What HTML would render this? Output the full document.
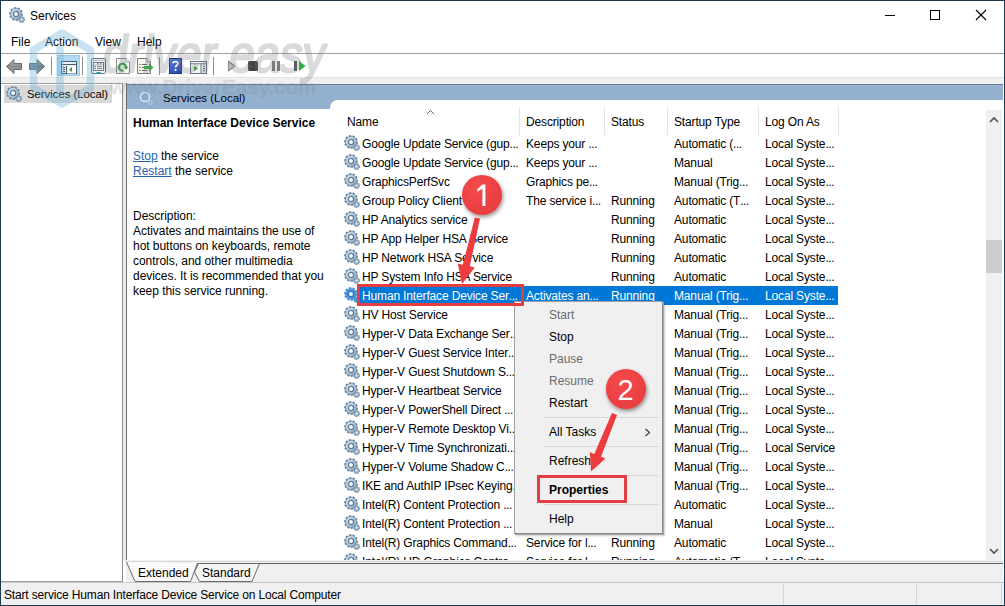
<!DOCTYPE html>
<html><head><meta charset="utf-8">
<style>
*{margin:0;padding:0;box-sizing:border-box}
html,body{width:1005px;height:606px;overflow:hidden;background:#fff}
body{position:relative;font-family:"Liberation Sans",sans-serif;font-size:12px;color:#000}
.a{position:absolute}
.t{position:absolute;white-space:nowrap;line-height:15px}
svg{display:block}
i{font-style:normal;letter-spacing:-0.45px}
</style></head><body>
<svg width="0" height="0" style="position:absolute">
<defs>
<linearGradient id="gg" x1="0" y1="0" x2="1" y2="1"><stop offset="0" stop-color="#dcebf7"/><stop offset="1" stop-color="#8fb0cc"/></linearGradient>
<symbol id="gear" viewBox="0 0 16 16">
<path fill="#6f8aa4" d="M12.38 6.54 L13.99 6.73 L13.60 9.32 L12.00 9.03 L11.62 9.79 L12.82 10.89 L10.98 12.76 L9.85 11.58 L9.10 11.97 L9.42 13.57 L6.83 14.00 L6.61 12.39 L5.78 12.26 L5.09 13.74 L2.75 12.56 L3.52 11.13 L2.92 10.54 L1.50 11.33 L0.29 9.00 L1.76 8.30 L1.62 7.46 L0.01 7.27 L0.40 4.68 L2.00 4.97 L2.38 4.21 L1.18 3.11 L3.02 1.24 L4.15 2.42 L4.90 2.03 L4.58 0.43 L7.17 0.00 L7.39 1.61 L8.22 1.74 L8.91 0.26 L11.25 1.44 L10.48 2.87 L11.08 3.46 L12.50 2.67 L13.71 5.00 L12.24 5.70Z"/>
<circle cx="7" cy="7" r="5.6" fill="#7f99b1"/>
<circle cx="7" cy="7" r="4.9" fill="url(#gg)"/>
<circle cx="7" cy="7" r="2.6" fill="#fff" stroke="#5d7890" stroke-width="1.3"/>
<path fill="#627c94" d="M14.99 12.37 L16.00 12.48 L15.68 14.03 L14.71 13.74 L14.45 14.13 L15.09 14.92 L13.77 15.79 L13.29 14.90 L12.83 14.99 L12.72 16.00 L11.17 15.68 L11.46 14.71 L11.07 14.45 L10.28 15.09 L9.41 13.77 L10.30 13.29 L10.21 12.83 L9.20 12.72 L9.52 11.17 L10.49 11.46 L10.75 11.07 L10.11 10.28 L11.43 9.41 L11.91 10.30 L12.37 10.21 L12.48 9.20 L14.03 9.52 L13.74 10.49 L14.13 10.75 L14.92 10.11 L15.79 11.43 L14.90 11.91Z"/>
<circle cx="12.6" cy="12.6" r="2.3" fill="#a0bad1"/>
<circle cx="12.6" cy="12.6" r="0.9" fill="#e8f0f6"/>
</symbol>
<symbol id="gearlight" viewBox="0 0 16 16">
<circle cx="12.83" cy="8.80" r="0.65" fill="#7f9dbd"/><circle cx="10.66" cy="11.88" r="0.65" fill="#7f9dbd"/><circle cx="7.09" cy="13.10" r="0.65" fill="#7f9dbd"/><circle cx="3.48" cy="11.99" r="0.65" fill="#7f9dbd"/><circle cx="1.23" cy="8.97" r="0.65" fill="#7f9dbd"/><circle cx="1.17" cy="5.20" r="0.65" fill="#7f9dbd"/><circle cx="3.34" cy="2.12" r="0.65" fill="#7f9dbd"/><circle cx="6.91" cy="0.90" r="0.65" fill="#7f9dbd"/><circle cx="10.52" cy="2.01" r="0.65" fill="#7f9dbd"/><circle cx="12.77" cy="5.03" r="0.65" fill="#7f9dbd"/>
<circle cx="7" cy="7" r="4.6" fill="#8eaacb" stroke="#dce8f3" stroke-width="1.5"/>
<circle cx="15.50" cy="12.30" r="0.5" fill="#7f9dbd"/><circle cx="14.56" cy="14.56" r="0.5" fill="#7f9dbd"/><circle cx="12.30" cy="15.50" r="0.5" fill="#7f9dbd"/><circle cx="10.04" cy="14.56" r="0.5" fill="#7f9dbd"/><circle cx="9.10" cy="12.30" r="0.5" fill="#7f9dbd"/><circle cx="10.04" cy="10.04" r="0.5" fill="#7f9dbd"/><circle cx="12.30" cy="9.10" r="0.5" fill="#7f9dbd"/><circle cx="14.56" cy="10.04" r="0.5" fill="#7f9dbd"/>
<circle cx="12.3" cy="12.3" r="2" fill="none" stroke="#c2d4e6" stroke-width="1"/>
</symbol>
<symbol id="gearsel" viewBox="0 0 16 16">
<path fill="#4f94d8" d="M12.38 6.54 L13.99 6.73 L13.60 9.32 L12.00 9.03 L11.62 9.79 L12.82 10.89 L10.98 12.76 L9.85 11.58 L9.10 11.97 L9.42 13.57 L6.83 14.00 L6.61 12.39 L5.78 12.26 L5.09 13.74 L2.75 12.56 L3.52 11.13 L2.92 10.54 L1.50 11.33 L0.29 9.00 L1.76 8.30 L1.62 7.46 L0.01 7.27 L0.40 4.68 L2.00 4.97 L2.38 4.21 L1.18 3.11 L3.02 1.24 L4.15 2.42 L4.90 2.03 L4.58 0.43 L7.17 0.00 L7.39 1.61 L8.22 1.74 L8.91 0.26 L11.25 1.44 L10.48 2.87 L11.08 3.46 L12.50 2.67 L13.71 5.00 L12.24 5.70Z"/>
<circle cx="7" cy="7" r="5.6" fill="#4f94d8"/>
<circle cx="7" cy="7" r="4.9" fill="#4f94d8"/>
<circle cx="7" cy="7" r="2.6" fill="#fff" stroke="#2a73c0" stroke-width="1.3"/>
<path fill="#4f94d8" d="M14.99 12.37 L16.00 12.48 L15.68 14.03 L14.71 13.74 L14.45 14.13 L15.09 14.92 L13.77 15.79 L13.29 14.90 L12.83 14.99 L12.72 16.00 L11.17 15.68 L11.46 14.71 L11.07 14.45 L10.28 15.09 L9.41 13.77 L10.30 13.29 L10.21 12.83 L9.20 12.72 L9.52 11.17 L10.49 11.46 L10.75 11.07 L10.11 10.28 L11.43 9.41 L11.91 10.30 L12.37 10.21 L12.48 9.20 L14.03 9.52 L13.74 10.49 L14.13 10.75 L14.92 10.11 L15.79 11.43 L14.90 11.91Z"/>
<circle cx="12.6" cy="12.6" r="2.3" fill="#4f94d8"/>
<circle cx="12.6" cy="12.6" r="0.9" fill="#4f94d8"/>
</symbol>
</defs>
</svg>

<!-- window frame -->
<div class="a" style="left:0;top:0;width:1005px;height:606px;border:1px solid #1d3a4e"></div>

<!-- title bar -->
<svg class="a" style="left:9px;top:7px" width="16" height="16"><use href="#gear"/></svg>
<div class="t" style="left:30px;top:9px">Services</div>
<div class="a" style="left:885px;top:15px;width:10px;height:1px;background:#000"></div>
<div class="a" style="left:930px;top:10px;width:10px;height:10px;border:1px solid #000"></div>
<svg class="a" style="left:975px;top:9px" width="12" height="12"><path d="M1 1L11 11M11 1L1 11" stroke="#000" stroke-width="1.1"/></svg>

<!-- menu -->
<div class="t" style="left:11px;top:35px">File</div>
<div class="t" style="left:45px;top:35px">Action</div>
<div class="t" style="left:95px;top:35px">View</div>
<div class="t" style="left:137px;top:35px">Help</div>
<div class="a" style="left:1px;top:53px;width:1003px;height:1px;background:#a0a0a0"></div>

<!-- toolbar -->
<svg class="a" style="left:5px;top:58px" width="18" height="17" viewBox="0 0 18 17"><defs><linearGradient id="ba" x1="0" y1="0" x2="0" y2="1"><stop offset="0" stop-color="#b8b8b8"/><stop offset="0.5" stop-color="#8c8c8c"/><stop offset="1" stop-color="#a8a8a8"/></linearGradient></defs><path d="M1.5 8.5L9 1.5V5.5H16.5V11.5H9V15.5Z" fill="url(#ba)" stroke="#6a6a6a" stroke-width="1" stroke-linejoin="round"/></svg>
<svg class="a" style="left:28px;top:58px" width="18" height="17" viewBox="0 0 18 17"><defs><linearGradient id="fa" x1="0" y1="0" x2="0" y2="1"><stop offset="0" stop-color="#9fb2bd"/><stop offset="0.5" stop-color="#6b8796"/><stop offset="1" stop-color="#8aa0ac"/></linearGradient></defs><path d="M16.5 8.5L9 1.5V5.5H1.5V11.5H9V15.5Z" fill="url(#fa)" stroke="#5f6f78" stroke-width="1" stroke-linejoin="round"/></svg>
<div class="a" style="left:51px;top:57px;width:1px;height:18px;background:#8c8c8c"></div>
<div class="a" style="left:57px;top:55px;width:23px;height:21px;background:#b3daf3;border:1px solid #99cbec"></div>
<svg class="a" style="left:61px;top:61px" width="16" height="13" viewBox="0 0 16 13"><rect x="0.5" y="0.5" width="15" height="12" fill="#dbe9f3" stroke="#4d5d6c"/><path d="M1 2H10.5" stroke="#f4f8fb" stroke-width="1"/><path d="M12 2h1M14 2h1" stroke="#f4f8fb"/><path d="M0.5 3.5H15.5" stroke="#4d5d6c"/><path d="M1 4.5H15" stroke="#e8eef3"/><rect x="6" y="5" width="9" height="7.5" fill="#fbf8fb"/><path d="M5.5 5V12.5" stroke="#4d5d6c"/><path d="M2 6.5h2M2 8.5h2M2 10.5h2" stroke="#4d5d6c"/><path d="M11 6L8 8.5L11 11Z" fill="#28a428"/></svg>
<div class="a" style="left:82px;top:57px;width:1px;height:18px;background:#8c8c8c"></div>
<svg class="a" style="left:91px;top:58px" width="15" height="16" viewBox="0 0 15 16"><rect x="0.5" y="0.5" width="14" height="15" rx="1.2" fill="#f3f6f8" stroke="#5f6a75"/><path d="M2 2.5H12.5" stroke="#b5bec6"/><rect x="2.5" y="4.5" width="10" height="8" fill="#fff" stroke="#6a7580"/><path d="M6 5.8h2M9 5.8h2" stroke="#6a7580"/><path d="M3 7H12" stroke="#6a7580" stroke-width="0.6"/><circle cx="4.2" cy="8.7" r="0.7" fill="#4a5560"/><circle cx="4.2" cy="10.6" r="0.7" fill="#4a5560"/><path d="M6 8.7h5M6 10.6h5" stroke="#6a7580" stroke-width="1"/><rect x="5.5" y="14" width="4" height="2" fill="#20a0a0"/></svg>
<svg class="a" style="left:116px;top:58px" width="14" height="16" viewBox="0 0 14 16"><path d="M0.5 0.5H10L13.5 4V15.5H0.5Z" fill="#f9f9f9" stroke="#8a8a8a"/><path d="M10 0.5V4H13.5" fill="#fff" stroke="#9a9a9a"/><path d="M7.41 12.58 A3.50 3.50 0 1 1 9.99 8.89" fill="none" stroke="#3aa046" stroke-width="2.2"/><path d="M12.28 8.69 L7.70 9.10 L10.23 11.68Z" fill="#2e9a3c"/></svg>
<svg class="a" style="left:137px;top:58px" width="17" height="16" viewBox="0 0 17 16"><path d="M0.5 0.5H10L13.5 4V15.5H0.5Z" fill="#f8f6ea" stroke="#7a7a7a"/><path d="M10 0.5V4H13.5" fill="#fff" stroke="#8a8a8a"/><path d="M2.5 6.5h1M2.5 9.5h1M2.5 12.5h1" stroke="#222" stroke-width="1.2"/><path d="M5 6.5h5M5 9.5h5M5 12.5h5" stroke="#666" stroke-width="1"/><path d="M7 8H12V5.5L16.5 9.5L12 13.5V11H7Z" fill="#37b04a"/></svg>
<div class="a" style="left:159px;top:57px;width:1px;height:18px;background:#8c8c8c"></div>
<svg class="a" style="left:169px;top:58px" width="13" height="16" viewBox="0 0 13 16"><defs><linearGradient id="hq" x1="0" y1="0" x2="1" y2="1"><stop offset="0" stop-color="#5a7fe0"/><stop offset="1" stop-color="#243fa6"/></linearGradient></defs><rect x="0.5" y="0.5" width="12" height="15" fill="url(#hq)" stroke="#1f3388"/><path d="M4 5.2C4 3.3 9 3 9 5.5C9 7.3 6.5 7.3 6.5 9.5" fill="none" stroke="#fff" stroke-width="1.8"/><rect x="5.6" y="11" width="1.9" height="1.9" fill="#fff"/></svg>
<svg class="a" style="left:190px;top:61px" width="17" height="13" viewBox="0 0 17 13"><rect x="0.5" y="0.5" width="16" height="12" fill="#f4f6f8" stroke="#6a7480"/><line x1="0.5" y1="2.8" x2="16.5" y2="2.8" stroke="#6a7480"/><line x1="11" y1="3" x2="11" y2="12.5" stroke="#6a7480"/><path d="M4 5L8 7.5L4 10Z" fill="#2aa52a"/><path d="M13 5.3h2M13 7.5h2M13 9.7h2" stroke="#5a6a78"/></svg>
<div class="a" style="left:213px;top:57px;width:1px;height:18px;background:#8c8c8c"></div>
<svg class="a" style="left:227px;top:60px" width="9" height="12" viewBox="0 0 9 12"><path d="M1.5 1.2L7.8 6L1.5 10.8Z" fill="#c4c4c4" stroke="#8a8a8a" stroke-width="1.2" stroke-linejoin="round"/></svg>
<div class="a" style="left:248px;top:61px;width:10px;height:10px;background:#454545;border-radius:1.5px"></div>
<div class="a" style="left:272px;top:61px;width:3px;height:10px;background:#7a7a7a"></div>
<div class="a" style="left:277px;top:61px;width:3px;height:10px;background:#7a7a7a"></div>
<div class="a" style="left:294px;top:61px;width:3px;height:10px;background:#555"></div>
<svg class="a" style="left:298px;top:60px" width="8" height="12" viewBox="0 0 8 12"><path d="M1 1L7.5 6L1 11Z" fill="#27b33a"/></svg>
<!-- toolbar strip -->
<div class="a" style="left:1px;top:77px;width:1003px;height:7px;background:#f0f0f0;border-top:1px solid #e3e3e3"></div>

<!-- left tree panel -->
<div class="a" style="left:123px;top:83px;width:3px;height:478px;background:#ececec"></div>
<div class="a" style="left:1px;top:83px;width:122px;height:499px;border:1px solid #a0a0a0;border-left:none;border-right-color:#8c8c8c;background:#fff"></div>
<div class="a" style="left:4px;top:85px;width:108px;height:18px;background:#d9d9d9"></div>
<svg class="a" style="left:6px;top:86px" width="16" height="16"><use href="#gear"/></svg>
<div class="t" style="left:27px;top:87px;font-size:11.3px">Services (Local)</div>

<!-- right panel -->
<div class="a" style="left:126px;top:83px;width:877px;height:478px;background:#f0f0f0;border-left:1px solid #6e6e6e"></div>
<div class="a" style="left:127px;top:84px;width:876px;height:25px;background:#94b0cf;border-top:1px solid #6c7c8c"></div>
<svg class="a" style="left:138px;top:90px" width="16" height="16"><use href="#gearlight"/></svg>
<div class="t" style="left:163px;top:91px;font-size:11.5px">Services (Local)</div>

<!-- description pane -->
<div class="a" style="left:127px;top:109px;width:203px;height:452px;background:#fff"></div>
<div class="t" style="left:133px;top:116px;font-weight:bold">Human Interface Device Service</div>
<div class="t" style="left:133px;top:149px"><span style="color:#2a63ad;text-decoration:underline">Stop</span> the service</div>
<div class="t" style="left:133px;top:164px"><span style="color:#2a63ad;text-decoration:underline">Restart</span> the service</div>
<div class="t" style="left:133px;top:209px;line-height:15px;letter-spacing:-0.04px">Description:<br>Activates and maintains the use of<br>hot buttons on keyboards, remote<br>controls, and other multimedia<br>devices. It is recommended that you<br>keep this service running.</div>

<!-- list view -->
<div class="a" id="lv" style="left:330px;top:100px;width:673px;height:461px;background:#fff;border-top-left-radius:8px;overflow:hidden;letter-spacing:-0.15px">
<div class="t" style="left:17px;top:15px">Name</div>
<svg class="a" style="left:96px;top:9px" width="10" height="6"><path d="M1 5L4.5 1.5L8 5" fill="none" stroke="#606060" stroke-width="1"/></svg>
<div class="a" style="left:189px;top:7px;width:1px;height:28px;background:#e5e5e5"></div>
<div class="t" style="left:196px;top:15px">Description</div>
<div class="a" style="left:274px;top:7px;width:1px;height:28px;background:#e5e5e5"></div>
<div class="t" style="left:281px;top:15px">Status</div>
<div class="a" style="left:337px;top:7px;width:1px;height:28px;background:#e5e5e5"></div>
<div class="t" style="left:344px;top:15px">Startup Type</div>
<div class="a" style="left:428px;top:7px;width:1px;height:28px;background:#e5e5e5"></div>
<div class="t" style="left:435px;top:15px">Log On As</div>
<div class="a" style="left:508px;top:7px;width:1px;height:28px;background:#e5e5e5"></div>
<!-- scrollbar -->
<div class="a" style="left:656px;top:10px;width:16px;height:451px;background:#f0f0f0"></div>
<svg class="a" style="left:659px;top:16px" width="10" height="8"><path d="M1 6L5 2L9 6" fill="none" stroke="#505050" stroke-width="1.6"/></svg>
<div class="a" style="left:656px;top:140px;width:16px;height:33px;background:#cdcdcd"></div>
<svg class="a" style="left:659px;top:447px" width="10" height="8"><path d="M1 2L5 6L9 2" fill="none" stroke="#505050" stroke-width="1.6"/></svg>

<svg class="a" style="left:14px;top:35px" width="16" height="16"><use href="#gear"/></svg>
<div class="t" style="left:32px;top:37px">Google Update Service (gup<i>...</i></div>
<div class="t" style="left:196px;top:37px">Keeps your <i>...</i></div>
<div class="t" style="left:344px;top:37px">Automatic (<i>...</i></div>
<div class="t" style="left:435px;top:37px">Local Syste<i>...</i></div>
<svg class="a" style="left:14px;top:54px" width="16" height="16"><use href="#gear"/></svg>
<div class="t" style="left:32px;top:56px">Google Update Service (gup<i>...</i></div>
<div class="t" style="left:196px;top:56px">Keeps your <i>...</i></div>
<div class="t" style="left:344px;top:56px">Manual</div>
<div class="t" style="left:435px;top:56px">Local Syste<i>...</i></div>
<svg class="a" style="left:14px;top:73px" width="16" height="16"><use href="#gear"/></svg>
<div class="t" style="left:32px;top:75px">GraphicsPerfSvc</div>
<div class="t" style="left:196px;top:75px">Graphics pe<i>...</i></div>
<div class="t" style="left:344px;top:75px">Manual (Trig<i>...</i></div>
<div class="t" style="left:435px;top:75px">Local Syste<i>...</i></div>
<svg class="a" style="left:14px;top:92px" width="16" height="16"><use href="#gear"/></svg>
<div class="t" style="left:32px;top:94px">Group Policy Client</div>
<div class="t" style="left:196px;top:94px">The service i<i>...</i></div>
<div class="t" style="left:281px;top:94px">Running</div>
<div class="t" style="left:344px;top:94px">Automatic (T<i>...</i></div>
<div class="t" style="left:435px;top:94px">Local Syste<i>...</i></div>
<svg class="a" style="left:14px;top:111px" width="16" height="16"><use href="#gear"/></svg>
<div class="t" style="left:32px;top:113px">HP Analytics service</div>
<div class="t" style="left:281px;top:113px">Running</div>
<div class="t" style="left:344px;top:113px">Automatic</div>
<div class="t" style="left:435px;top:113px">Local Syste<i>...</i></div>
<svg class="a" style="left:14px;top:130px" width="16" height="16"><use href="#gear"/></svg>
<div class="t" style="left:32px;top:132px">HP App Helper HSA Service</div>
<div class="t" style="left:281px;top:132px">Running</div>
<div class="t" style="left:344px;top:132px">Automatic</div>
<div class="t" style="left:435px;top:132px">Local Syste<i>...</i></div>
<svg class="a" style="left:14px;top:149px" width="16" height="16"><use href="#gear"/></svg>
<div class="t" style="left:32px;top:151px">HP Network HSA Service</div>
<div class="t" style="left:281px;top:151px">Running</div>
<div class="t" style="left:344px;top:151px">Automatic</div>
<div class="t" style="left:435px;top:151px">Local Syste<i>...</i></div>
<svg class="a" style="left:14px;top:168px" width="16" height="16"><use href="#gear"/></svg>
<div class="t" style="left:32px;top:170px">HP System Info HSA Service</div>
<div class="t" style="left:281px;top:170px">Running</div>
<div class="t" style="left:344px;top:170px">Automatic</div>
<div class="t" style="left:435px;top:170px">Local Syste<i>...</i></div>
<div class="a" style="left:28px;top:186px;width:480px;height:19px;background:#0078d7"></div>
<svg class="a" style="left:14px;top:187px" width="16" height="16"><use href="#gearsel"/></svg>
<div class="t" style="left:32px;top:189px;color:#fff">Human Interface Device Ser<i>...</i></div>
<div class="t" style="left:196px;top:189px;color:#fff">Activates an<i>...</i></div>
<div class="t" style="left:281px;top:189px;color:#fff">Running</div>
<div class="t" style="left:344px;top:189px;color:#fff">Manual (Trig<i>...</i></div>
<div class="t" style="left:435px;top:189px;color:#fff">Local Syste<i>...</i></div>
<svg class="a" style="left:14px;top:206px" width="16" height="16"><use href="#gear"/></svg>
<div class="t" style="left:32px;top:208px">HV Host Service</div>
<div class="t" style="left:344px;top:208px">Manual (Trig<i>...</i></div>
<div class="t" style="left:435px;top:208px">Local Syste<i>...</i></div>
<svg class="a" style="left:14px;top:225px" width="16" height="16"><use href="#gear"/></svg>
<div class="t" style="left:32px;top:227px">Hyper-V Data Exchange Ser<i>...</i></div>
<div class="t" style="left:344px;top:227px">Manual (Trig<i>...</i></div>
<div class="t" style="left:435px;top:227px">Local Syste<i>...</i></div>
<svg class="a" style="left:14px;top:244px" width="16" height="16"><use href="#gear"/></svg>
<div class="t" style="left:32px;top:246px">Hyper-V Guest Service Inter<i>...</i></div>
<div class="t" style="left:344px;top:246px">Manual (Trig<i>...</i></div>
<div class="t" style="left:435px;top:246px">Local Syste<i>...</i></div>
<svg class="a" style="left:14px;top:263px" width="16" height="16"><use href="#gear"/></svg>
<div class="t" style="left:32px;top:265px">Hyper-V Guest Shutdown S<i>...</i></div>
<div class="t" style="left:344px;top:265px">Manual (Trig<i>...</i></div>
<div class="t" style="left:435px;top:265px">Local Syste<i>...</i></div>
<svg class="a" style="left:14px;top:282px" width="16" height="16"><use href="#gear"/></svg>
<div class="t" style="left:32px;top:284px">Hyper-V Heartbeat Service</div>
<div class="t" style="left:344px;top:284px">Manual (Trig<i>...</i></div>
<div class="t" style="left:435px;top:284px">Local Syste<i>...</i></div>
<svg class="a" style="left:14px;top:301px" width="16" height="16"><use href="#gear"/></svg>
<div class="t" style="left:32px;top:303px">Hyper-V PowerShell Direct <i>...</i></div>
<div class="t" style="left:344px;top:303px">Manual (Trig<i>...</i></div>
<div class="t" style="left:435px;top:303px">Local Syste<i>...</i></div>
<svg class="a" style="left:14px;top:320px" width="16" height="16"><use href="#gear"/></svg>
<div class="t" style="left:32px;top:322px">Hyper-V Remote Desktop Vi<i>...</i></div>
<div class="t" style="left:344px;top:322px">Manual (Trig<i>...</i></div>
<div class="t" style="left:435px;top:322px">Local Syste<i>...</i></div>
<svg class="a" style="left:14px;top:339px" width="16" height="16"><use href="#gear"/></svg>
<div class="t" style="left:32px;top:341px">Hyper-V Time Synchronizati<i>...</i></div>
<div class="t" style="left:344px;top:341px">Manual (Trig<i>...</i></div>
<div class="t" style="left:435px;top:341px">Local Service</div>
<svg class="a" style="left:14px;top:358px" width="16" height="16"><use href="#gear"/></svg>
<div class="t" style="left:32px;top:360px">Hyper-V Volume Shadow C<i>...</i></div>
<div class="t" style="left:344px;top:360px">Manual (Trig<i>...</i></div>
<div class="t" style="left:435px;top:360px">Local Syste<i>...</i></div>
<svg class="a" style="left:14px;top:377px" width="16" height="16"><use href="#gear"/></svg>
<div class="t" style="left:32px;top:379px">IKE and AuthIP IPsec Keying<i>...</i></div>
<div class="t" style="left:344px;top:379px">Manual (Trig<i>...</i></div>
<div class="t" style="left:435px;top:379px">Local Syste<i>...</i></div>
<svg class="a" style="left:14px;top:396px" width="16" height="16"><use href="#gear"/></svg>
<div class="t" style="left:32px;top:398px">Intel(R) Content Protection <i>...</i></div>
<div class="t" style="left:344px;top:398px">Automatic</div>
<div class="t" style="left:435px;top:398px">Local Syste<i>...</i></div>
<svg class="a" style="left:14px;top:415px" width="16" height="16"><use href="#gear"/></svg>
<div class="t" style="left:32px;top:417px">Intel(R) Content Protection <i>...</i></div>
<div class="t" style="left:344px;top:417px">Manual</div>
<div class="t" style="left:435px;top:417px">Local Syste<i>...</i></div>
<svg class="a" style="left:14px;top:434px" width="16" height="16"><use href="#gear"/></svg>
<div class="t" style="left:32px;top:436px">Intel(R) Graphics Command<i>...</i></div>
<div class="t" style="left:196px;top:436px">Service for l<i>...</i></div>
<div class="t" style="left:281px;top:436px">Running</div>
<div class="t" style="left:344px;top:436px">Automatic</div>
<div class="t" style="left:435px;top:436px">Local Syste<i>...</i></div>
<svg class="a" style="left:14px;top:453px" width="16" height="16"><use href="#gear"/></svg>
<div class="t" style="left:32px;top:455px">Intel(R) HD Graphics Contro<i>...</i></div>
<div class="t" style="left:196px;top:455px">Service for l<i>...</i></div>
<div class="t" style="left:281px;top:455px">Running</div>
<div class="t" style="left:344px;top:455px">Automatic (T<i>...</i></div>
<div class="t" style="left:435px;top:455px">Local Syste<i>...</i></div>
</div>
<!-- context menu -->
<div class="a" style="left:514px;top:301px;width:149px;height:233px;background:#f0f0f0;border:1px solid #a0a0a0;border-right-color:#8a8a8a;border-bottom-color:#8a8a8a;box-shadow:1px 1px 0 #a8a8a8,2px 2px 2px rgba(0,0,0,0.2)"></div>
<div class="t" style="left:549px;top:308px;color:#6d6d6d">Start</div>
<div class="t" style="left:549px;top:330px">Stop</div>
<div class="t" style="left:549px;top:352px;color:#6d6d6d">Pause</div>
<div class="t" style="left:549px;top:374px;color:#6d6d6d">Resume</div>
<div class="t" style="left:549px;top:396px">Restart</div>
<div class="a" style="left:544px;top:417px;width:115px;height:1px;background:#d7d7d7"></div>
<div class="t" style="left:549px;top:425px">All Tasks</div>
<svg class="a" style="left:644px;top:428px" width="7" height="9" viewBox="0 0 7 9"><path d="M1.5 1L5.5 4.5L1.5 8" fill="none" stroke="#333" stroke-width="1.1"/></svg>
<div class="a" style="left:544px;top:446px;width:115px;height:1px;background:#d7d7d7"></div>
<div class="t" style="left:549px;top:454px">Refresh</div>
<div class="a" style="left:544px;top:475px;width:115px;height:1px;background:#d7d7d7"></div>
<div class="t" style="left:549px;top:483px;font-weight:bold">Properties</div>
<div class="a" style="left:544px;top:504px;width:115px;height:1px;background:#d7d7d7"></div>
<div class="t" style="left:549px;top:512px">Help</div>
<div class="a" style="left:537px;top:475px;width:90px;height:28px;border:3px solid #e53d42"></div>
<!-- red box around selected name -->
<div class="a" style="left:357px;top:284px;width:167px;height:22px;border:3px solid #e53d42"></div>
<!-- annotation 1 -->
<svg class="a" style="left:440px;top:160px" width="240" height="320" viewBox="440 160 240 320">
<defs>
<radialGradient id="rc" cx="0.4" cy="0.35" r="0.7"><stop offset="0" stop-color="#f44a4c"/><stop offset="1" stop-color="#e83d40"/></radialGradient>
<filter id="sh" x="-30%" y="-30%" width="160%" height="160%"><feGaussianBlur in="SourceAlpha" stdDeviation="2"/><feOffset dx="1" dy="2"/><feComponentTransfer><feFuncA type="linear" slope="0.45"/></feComponentTransfer><feMerge><feMergeNode/><feMergeNode in="SourceGraphic"/></feMerge></filter>
</defs>
<g filter="url(#sh)">
<circle cx="482" cy="195" r="20" fill="url(#rc)"/>
<circle cx="626" cy="389" r="20" fill="url(#rc)"/>
</g>
<path d="M482.4 184.5H485.4V206H482.4V188.6L477.4 191.8V188.9Z" fill="#fff"/>
<text x="625.5" y="400" font-family="Liberation Sans" font-size="29" fill="#fff" text-anchor="middle">2</text>
<path d="M480.0 218.6 L469.8 266.3 L474.8 267.5 L462.0 284.0 L457.8 263.5 L462.8 264.7 L474.8 217.4Z" fill="#ee3b3f"/>
<path d="M617.0 415.0 L601.0 456.7 L605.5 458.5 L591.0 471.5 L589.8 452.1 L594.3 453.9 L612.0 413.0Z" fill="#ee3b3f"/>
</svg>


<!-- tabs -->
<svg class="a" style="left:126px;top:560px" width="877" height="23" viewBox="126 560 877 23">
<rect x="126" y="560" width="877" height="23" fill="#f0f0f0"/>
<rect x="126" y="561" width="877" height="1" fill="#d8d8d8"/>
<rect x="197" y="563" width="806" height="1" fill="#606060"/>
<path d="M126.5 562L135 581.5H190.5L197.5 563" fill="#fafafa" stroke="#6a6a6a" stroke-width="1"/>
<path d="M198.5 563.5L194.5 572L199.5 581.5H252L259.5 563.5Z" fill="#f4f4f4" stroke="#6a6a6a" stroke-width="1"/>
<rect x="126" y="582" width="877" height="1" fill="#c8c8c8"/>
</svg>
<div class="t" style="left:138px;top:566px">Extended</div>
<div class="t" style="left:202px;top:566px">Standard</div>
<!-- status bar -->
<div class="a" style="left:1px;top:582px;width:1003px;height:23px;background:#f0f0f0;border-top:1px solid #c8c8c8"></div>
<div class="a" style="left:783px;top:584px;width:1px;height:20px;background:#d5d5d5"></div>
<div class="a" style="left:916px;top:584px;width:1px;height:20px;background:#d5d5d5"></div>
<div class="a" style="left:1001px;top:584px;width:1px;height:20px;background:#d5d5d5"></div>
<div class="t" style="left:4px;top:588px;letter-spacing:-0.16px">Start service Human Interface Device Service on Local Computer</div>

<!-- watermark -->
<svg class="a" style="left:0;top:0;pointer-events:none" width="400" height="120" viewBox="0 0 400 120">
<defs><filter id="wb" x="-20%" y="-20%" width="140%" height="140%"><feGaussianBlur stdDeviation="0.7"/></filter></defs>
<g opacity="0.36" filter="url(#wb)" fill="none" stroke="#6fb3d6" stroke-width="7.5" stroke-linejoin="round" stroke-linecap="round">
<path d="M62 33L90.5 50V88L62 104L33.5 88V50Z"/>
<path d="M60 48V96"/>
</g>
<g opacity="0.28" fill="#787e86" stroke="#787e86" stroke-width="2.2" stroke-linejoin="round">
<text x="0" y="0" transform="translate(101 72) skewX(-8) scale(0.875 1)" font-family="Liberation Sans" font-size="52" letter-spacing="0">driver easy</text>
</g>
<text x="110" y="94" font-family="Liberation Sans" font-weight="bold" font-size="20.5" fill="#7a8088" stroke="#7a8088" stroke-width="0.6" opacity="0.2">www.DriverEasy.com</text>
</svg>
</body></html>
